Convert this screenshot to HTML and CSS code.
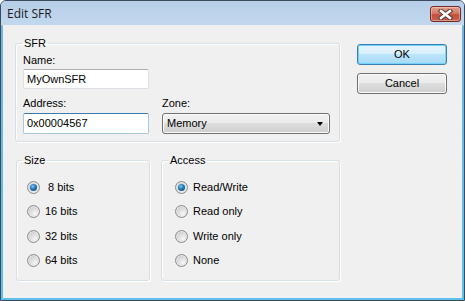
FILE: index.html
```html
<!DOCTYPE html>
<html>
<head>
<meta charset="utf-8">
<link rel="stylesheet" href="styles.css">
</head>
<body>
<div class="window">
  <div class="titlebar">
    <span class="title">Edit SFR</span>
    <div class="close">
      <svg width="15" height="11" viewBox="0 0 15 11">
        <path d="M3 2 L12 9 M12 2 L3 9" stroke="#5b3a36" stroke-width="4.6" stroke-linecap="square" fill="none"/>
        <path d="M3 2 L12 9 M12 2 L3 9" stroke="#ffffff" stroke-width="2.6" stroke-linecap="square" fill="none"/>
      </svg>
    </div>
  </div>
  <div class="client">
    <div class="main">
      <fieldset class="group sfr">
        <legend>SFR</legend>
        <div class="sfr-body">
          <div class="lbl">Name:</div>
          <div class="spacer"></div>
          <div class="edit name-edit">MyOwnSFR</div>
          <div class="spacer"></div>
          <div class="lbl lbl-addr">Address:</div>
          <div class="lbl lbl-addr">Zone:</div>
          <div class="edit focused">0x00004567</div>
          <div class="combo">
            <span>Memory</span>
            <span class="arrow"></span>
          </div>
        </div>
      </fieldset>
      <div class="row2">
        <fieldset class="group size">
          <legend>Size</legend>
          <div class="radios">
            <div class="radio-row"><span class="radio checked"></span><span>&nbsp;8 bits</span></div>
            <div class="radio-row"><span class="radio"></span><span>16 bits</span></div>
            <div class="radio-row"><span class="radio"></span><span>32 bits</span></div>
            <div class="radio-row"><span class="radio"></span><span>64 bits</span></div>
          </div>
        </fieldset>
        <fieldset class="group access">
          <legend>Access</legend>
          <div class="radios">
            <div class="radio-row"><span class="radio checked"></span><span>Read/Write</span></div>
            <div class="radio-row"><span class="radio"></span><span>Read only</span></div>
            <div class="radio-row"><span class="radio"></span><span>Write only</span></div>
            <div class="radio-row"><span class="radio"></span><span>None</span></div>
          </div>
        </fieldset>
      </div>
    </div>
    <div class="buttons">
      <div class="btn default">OK</div>
      <div class="btn">Cancel</div>
    </div>
  </div>
</div>
</body>
</html>
```
FILE: styles.css
```css
html, body {
  margin: 0;
  padding: 0;
  background: #ffffff;
}
body {
  font-family: "Liberation Sans", Arial, sans-serif;
  font-size: 11px;
  line-height: 13px;
  color: #000;
}
.window {
  width: 465px;
  height: 301px;
  box-sizing: border-box;
  border: 1px solid #3a4b5e;
  border-radius: 6px 6px 0 0;
  background: linear-gradient(#b7cfe8 0px, #bdd4ec 24px, #6fb6e0 25px, #5cc0ea 100%);
  display: flex;
  flex-direction: column;
  overflow: hidden;
}
.titlebar {
  height: 24px;
  flex: none;
  display: flex;
  align-items: center;
  padding-left: 6px;
  background: linear-gradient(#b6cee8, #c3d8ee);
}
.title {
  font-family: "Open Sans", "Noto Sans", sans-serif;
  font-size: 12px;
  color: #1a1a1a;
  margin-top: 1px;
}
.close {
  margin-left: auto;
  margin-right: 3px;
  margin-top: 2px;
  width: 31px;
  height: 16px;
  box-sizing: border-box;
  border: 1px solid #6e2d25;
  border-radius: 3px;
  background: linear-gradient(#e3a08f 0%, #d27a66 45%, #c24f3c 55%, #c9604b 100%);
  box-shadow: inset 0 0 0 1px rgba(255,220,210,0.45);
  display: flex;
  align-items: center;
  justify-content: center;
}
.close svg { display: block; }
.client {
  flex: 1;
  margin: 0 2px 2px 2px;
  background: #f0f0f0;
  display: flex;
  padding: 12px 0 0 12px;
  box-sizing: border-box;
}
.main {
  width: 325px;
  display: flex;
  flex-direction: column;
}
.group {
  margin: 0;
  padding: 0;
  border: 1px solid #d5dfe5;
  border-radius: 3px;
  box-shadow: inset 1px 1px 0 #fff, 1px 1px 0 #fff;
  min-width: 0;
}
.group legend {
  padding: 0 2px;
  margin-left: 6px;
  line-height: 13px;
}
.sfr-body {
  display: grid;
  grid-template-columns: 126px 168px;
  column-gap: 13px;
  padding: 4px 0 7px 7px;
}
.lbl { line-height: 13px; }
.lbl-addr { margin-top: 8px; }
.edit {
  height: 20px;
  box-sizing: border-box;
  margin-top: 2px;
  border: 1px solid #dbdfe6;
  border-top-color: #abadb3;
  border-radius: 2px;
  background: #fff;
  padding-left: 3px;
  line-height: 18px;
}
.edit.focused {
  margin-top: 3px;
  height: 21px;
  line-height: 19px;
  border-color: #a4c9e3;
  border-top-color: #3d7bad;
}
.combo {
  margin-top: 3px;
  height: 21px;
  box-sizing: border-box;
  border: 1px solid #707070;
  border-radius: 3px;
  background: linear-gradient(#f2f2f2 0%, #ebebeb 50%, #dddddd 50%, #cfcfcf 100%);
  box-shadow: inset 0 0 0 1px #fbfbfb;
  display: flex;
  align-items: center;
  padding: 0 6px 0 4px;
}
.arrow {
  margin-left: auto;
  width: 0;
  height: 0;
  border-left: 3.5px solid transparent;
  border-right: 3.5px solid transparent;
  border-top: 4px solid #000;
}
.row2 {
  display: flex;
  margin-top: 12px;
}
.size {
  width: 134px;
  margin-left: 1px;
  box-sizing: border-box;
}
.size legend { margin-left: 5px; }
.access {
  width: 179px;
  margin-left: 11px;
  box-sizing: border-box;
}
.radios {
  display: flex;
  flex-direction: column;
  gap: 11px;
  padding: 14px 0 13px 10px;
}
.access .radios { padding-left: 13px; }
.radio-row {
  display: flex;
  align-items: center;
  gap: 5px;
  height: 13px;
}
.radio-row:nth-child(3) { margin-top: 1px; }
.radio {
  width: 13px;
  height: 13px;
  box-sizing: border-box;
  border-radius: 50%;
  border: 1px solid #8c8c8c;
  background: radial-gradient(circle at 65% 70%, #f7f7f7 0%, #e0e0e0 40%, #bdbdbd 100%);
  box-shadow: inset 0 0 0 1px #e8e8e8;
  display: flex;
  align-items: center;
  justify-content: center;
  flex: none;
}
.radio.checked::after {
  content: "";
  width: 7px;
  height: 7px;
  border-radius: 50%;
  background: radial-gradient(circle at 40% 35%, #7fcaf2 0%, #1f76b8 45%, #0b3f78 100%);
}
.buttons {
  margin-left: 17px;
  padding-top: 7px;
  display: flex;
  flex-direction: column;
  gap: 8px;
}
.btn {
  width: 90px;
  height: 21px;
  box-sizing: border-box;
  border: 1px solid #707070;
  border-radius: 3px;
  background: linear-gradient(#f2f2f2 0%, #ebebeb 50%, #dddddd 50%, #cfcfcf 100%);
  box-shadow: inset 0 0 0 1px #fcfcfc;
  display: flex;
  align-items: center;
  justify-content: center;
}
.btn.default {
  border-color: #3c7fb1;
  background: linear-gradient(#e8f6fd 0%, #d6effc 50%, #bce5fb 50%, #a7daf6 100%);
  box-shadow: inset 0 0 0 1px #6fd3fb;
}
```
